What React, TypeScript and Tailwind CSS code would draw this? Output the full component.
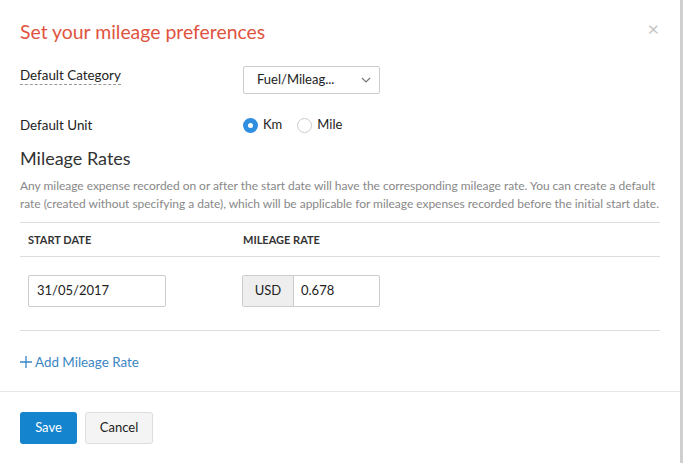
import React from "react";

export default function App() {
  return (
    <div className="w-[683px] h-[463px] flex bg-white overflow-hidden" style={{ fontFamily: "Lato, 'Open Sans', sans-serif" }}>
      <div className="w-[680px] h-full flex flex-col bg-white">
        <div className="flex items-start justify-between pl-5 pr-[21px] pt-[20px]">
          <h1 className="text-[19.4px] leading-[24px] text-[#e0533f]">Set your mileage preferences</h1>
          <span className="text-[#c5c5c5] text-[20px] leading-[18px] -mt-[1px]">×</span>
        </div>
        <div className="px-5 pt-[22px]">
          <div className="flex items-center h-[28px]">
            <div className="w-[223px] text-[13.4px] text-[#222] -mt-[10px]">
              <span className="border-b border-dashed border-[#999] pb-[1px]">Default Category</span>
            </div>
            <div className="w-[137px] h-[28px] border border-[#ccc] rounded-[2px] flex items-center justify-between pl-[13px] pr-[8px] text-[13px] text-[#222]">
              <span>Fuel/Mileag...</span>
              <svg width="10" height="6" viewBox="0 0 10 6" fill="none"><path d="M1 1l4 4 4-4" stroke="#777" strokeWidth="1.2" /></svg>
            </div>
          </div>
          <div className="flex items-center h-[20px] mt-[21px]">
            <div className="w-[223px] text-[13.4px] text-[#222]">Default Unit</div>
            <div className="flex items-center text-[13px] text-[#222]">
              <span className="w-[15px] h-[15px] rounded-full bg-[#2f8ee0] flex items-center justify-center">
                <span className="w-[5px] h-[5px] rounded-full bg-white" />
              </span>
              <span className="ml-[5px]">Km</span>
              <span className="ml-[15px] w-[15px] h-[15px] rounded-full border border-[#ccc] bg-white" />
              <span className="ml-[5px]">Mile</span>
            </div>
          </div>
          <h2 className="mt-[11px] text-[18px] leading-[24px] text-[#333]">Mileage Rates</h2>
          <p className="mt-[7px] text-[12px] leading-[18px] text-[#888] whitespace-nowrap tracking-[-0.03px]">
            Any mileage expense recorded on or after the start date will have the corresponding mileage rate. You can create a default
            <br />
            rate (created without specifying a date), which will be applicable for mileage expenses recorded before the initial start date.
          </p>
          <div className="mt-[9px] border-t border-[#ddd] flex items-center h-[34px] pt-[1px] text-[11px] font-bold text-[#333] uppercase">
            <div className="w-[223px] pl-2">Start Date</div>
            <div>Mileage Rate</div>
          </div>
          <div className="border-t border-[#ddd] h-[74px] flex items-start pt-[18px]">
            <div className="w-[222px] pl-2">
              <div className="w-[138px] h-[32px] border border-[#ccc] rounded-[2px] flex items-center px-[8px] text-[13px] text-[#222]">31/05/2017</div>
            </div>
            <div className="flex h-[32px] border border-[#ccc] rounded-[2px] text-[13px] text-[#222]">
              <div className="w-[51px] bg-[#eee] border-r border-[#ccc] flex items-center justify-center">USD</div>
              <div className="w-[85px] flex items-center px-[7px]">0.678</div>
            </div>
          </div>
          <div className="border-t border-[#ddd] h-[61px] flex items-center pt-[2px] text-[13.4px] text-[#3b86c4]">
            <svg width="12" height="12" viewBox="0 0 12 12" className="mr-[3px]"><path d="M6 0v12M0 6h12" stroke="#3b86c4" strokeWidth="1.3" /></svg>
            <span>Add Mileage Rate</span>
          </div>
        </div>
        <div className="border-t border-[#e6e6e6] flex items-center gap-[8px] px-5 pt-[20px]">
          <button className="w-[57px] h-[32px] bg-[#1484cf] rounded-[3px] text-white text-[13px]">Save</button>
          <button className="w-[68px] h-[32px] bg-[#f4f4f4] border border-[#ddd] rounded-[3px] text-[#222] text-[13px]">Cancel</button>
        </div>
      </div>
      <div className="w-[3px] h-full bg-[#cfcfcf]" />
    </div>
  );
}
